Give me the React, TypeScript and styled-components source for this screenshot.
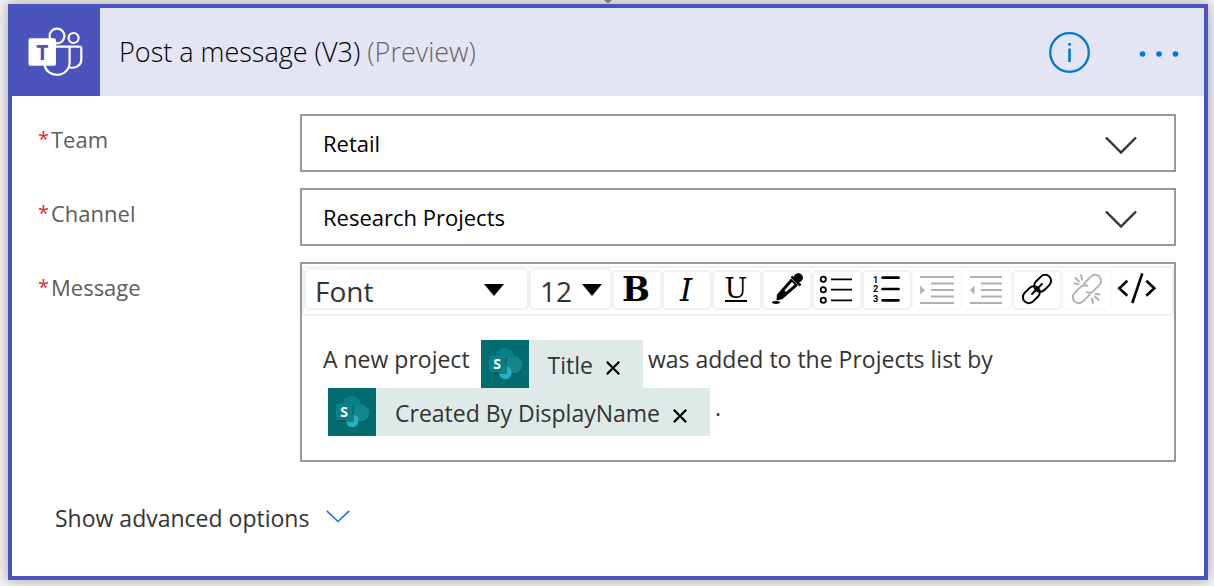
import React from "react";
import styled, { createGlobalStyle } from "styled-components";

const GlobalStyle = createGlobalStyle`
  *, *::before, *::after { box-sizing: border-box; }
  body {
    margin: 0;
    background: #f4f4f4;
    font-family: "Open Sans", "Noto Sans", sans-serif;
    font-size: 22px;
    color: #333;
  }
  button, select {
    font: inherit;
    color: inherit;
    margin: 0;
    padding: 0;
    border: 0;
    background: none;
  }
`;

const Page = styled.main`
  padding: 0 6px 6px 8px;
`;

const Connector = styled.svg`
  display: block;
  margin: 0 auto;
`;

const Card = styled.section`
  background: #fff;
  border: 4px solid #4b53bc;
  box-shadow: 0 0 14px rgba(0, 0, 0, 0.35);
`;

const Header = styled.header`
  display: flex;
  align-items: center;
  height: 88px;
  padding-right: 24px;
  background: #e4e5f4;
`;

const Logo = styled.div`
  width: 88px;
  height: 88px;
  margin-right: 19px;
  background: #4b53bc;
`;

const Title = styled.h1`
  flex: 1;
  margin: 0;
  font-size: 27px;
  line-height: 40px;
  font-weight: 300;
  color: #000;
`;

const Preview = styled.span`
  color: #666;
`;

const HeaderButton = styled.button`
  display: flex;
  color: #0078d9;
  & + & { margin-left: 48px; }
`;

const Body = styled.div`
  display: flex;
  flex-direction: column;
  gap: 16px;
  padding: 18px 28px 42px 26px;
`;

const Field = styled.div`
  display: grid;
  grid-template-columns: 262px minmax(0, 1fr);
  align-items: start;
`;

const Label = styled.label`
  display: flex;
  gap: 4px;
  padding-top: 9px;
  line-height: 32px;
  color: #5c5c5c;
`;

const Required = styled.span`
  width: 9px;
  font-size: 20px;
  color: #f0202c;
`;

const SelectBox = styled.div`
  display: grid;
  align-items: center;
  border: 2px solid #989898;
`;

const Select = styled.select`
  grid-area: 1 / 1;
  width: 100%;
  height: 54px;
  padding-left: 21px;
  appearance: none;
  color: #000;
`;

const SelectArrow = styled.svg`
  grid-area: 1 / 1;
  justify-self: end;
  margin-top: 4px;
  margin-right: 37px;
  pointer-events: none;
`;

const Editor = styled.div`
  min-height: 200px;
  border: 2px solid #989898;
`;

const Toolbar = styled.div`
  display: flex;
  flex-wrap: wrap;
  align-items: flex-end;
  margin-top: 2px;
  padding-bottom: 4px;
  border: 2px solid #f1f1f1;
  border-radius: 4px;
`;

const ToolPicker = styled.div<{ $width: number }>`
  display: grid;
  align-items: center;
  width: ${(p) => p.$width}px;
  height: 42px;
  border: 2px solid #f1f1f1;
  border-radius: 5px;
`;

const ToolSelect = styled.select`
  grid-area: 1 / 1;
  width: 100%;
  height: 38px;
  padding: 4px 0 0 9px;
  appearance: none;
  font-size: 28px;
  line-height: 34px;
`;

const ToolArrow = styled.svg<{ $end: number }>`
  grid-area: 1 / 1;
  justify-self: end;
  margin-top: 2px;
  margin-right: ${(p) => p.$end}px;
  pointer-events: none;
`;

const ToolButton = styled.button<{ $plain?: boolean }>`
  display: flex;
  align-items: center;
  justify-content: center;
  width: 50px;
  height: 40px;
  border: 2px solid ${(p) => (p.$plain ? "transparent" : "#f1f1f1")};
  border-radius: 5px;
  color: #000;
  &:disabled { opacity: 0.3; }
`;

const Glyph = styled.span<{ $kind: "bold" | "italic" | "underline" }>`
  margin-right: 2px;
  font-family: "DejaVu Serif", serif;
  font-size: ${(p) => (p.$kind === "bold" ? 33 : p.$kind === "italic" ? 31 : 27)}px;
  line-height: ${(p) => (p.$kind === "underline" ? 22 : 36)}px;
  font-weight: ${(p) => (p.$kind === "bold" ? 700 : 400)};
  font-style: ${(p) => (p.$kind === "italic" ? "italic" : "normal")};
  border-bottom: ${(p) => (p.$kind === "underline" ? "2px solid #000" : "0")};
`;

const Content = styled.div`
  padding: 24px 21px;
  font-size: 23px;
  line-height: 24px;
  outline: none;
`;

const Token = styled.span`
  display: inline-flex;
  align-items: center;
  height: 48px;
  margin: 0 5px;
  padding-right: 23px;
  vertical-align: -20px;
  background: #dee9e8;
`;

const TokenLabel = styled.span`
  padding: 2px 13px 0 19px;
`;

const TokenRemove = styled.button`
  display: flex;
  padding-top: 8px;
  color: #000;
`;

const Advanced = styled.button`
  display: flex;
  align-items: center;
  gap: 17px;
  align-self: flex-start;
  margin: 24px 0 0 17px;
  font-size: 23px;
  line-height: 32px;
`;

const TeamsIcon = () => (
  <svg width="88" height="88" viewBox="12 8 88 88" fill="none" stroke="#fff" strokeWidth="2.2" aria-hidden="true">
    <circle cx="57" cy="36" r="7.4" />
    <circle cx="73.6" cy="38" r="5" />
    <path d="M55 46.7h24.5q1.8 0 1.8 1.8v10.8c0 5.600-4.600 9.400-11.500 8.200" />
    <path d="M69.600 46.700v15.500c0 7.500-5.600 12.600-12.500 12.600c-6.500 0-11.600-4-12.500-9.800" />
    <rect x="28.500" y="38.300" width="27.500" height="27.500" rx="2" fill="#fff" stroke="none" />
    <text x="42.300" y="59.500" textAnchor="middle" fontFamily="Open Sans, sans-serif" fontWeight="700" fontSize="21" fill="#4b53bc" stroke="none">T</text>
  </svg>
);

const SharePointIcon = () => (
  <svg width="48" height="48" viewBox="0 0 48 48" aria-hidden="true">
    <rect width="48" height="48" fill="#036c70" />
    <circle cx="24" cy="18.500" r="10.500" fill="#025c60" opacity=".6" />
    <circle cx="23.600" cy="17.500" r="9.700" fill="#058084" />
    <circle cx="33.300" cy="26" r="9" fill="#025c60" opacity=".5" />
    <circle cx="33" cy="25" r="8.400" fill="#12868a" />
    <circle cx="24.300" cy="32.600" r="6.400" fill="#27b1bf" />
    <rect x="9" y="17" width="17" height="17" rx="1" fill="#024f52" opacity=".5" />
    <rect x="8" y="16" width="16.400" height="16" rx="1" fill="#088286" />
    <text x="16.200" y="29" textAnchor="middle" fontFamily="Open Sans, sans-serif" fontWeight="700" fontSize="14" fill="#fff">S</text>
  </svg>
);

const ToolIcon = ({ children }: { children: React.ReactNode }) => (
  <svg width="46" height="36" viewBox="0 0 46 36" fill="none" stroke="currentColor" strokeWidth="2" aria-hidden="true">
    {children}
  </svg>
);

const Chevron = () => (
  <SelectArrow width="32" height="18" viewBox="0 0 32 18" fill="none" stroke="#333" strokeWidth="2.4" aria-hidden="true">
    <path d="M1 1.500l15 15l15-15" />
  </SelectArrow>
);

const Triangle = ({ end }: { end: number }) => (
  <ToolArrow $end={end} width="20" height="12" viewBox="0 0 20 12" aria-hidden="true">
    <path d="M0 0h20l-10 12z" />
  </ToolArrow>
);

const Star = () => <Required aria-hidden="true">*</Required>;

function DynamicToken({ name }: { name: string }) {
  return (
    <Token contentEditable={false}>
      <SharePointIcon />
      <TokenLabel>{name}</TokenLabel>
      <TokenRemove type="button" aria-label={`Remove ${name}`}>
        <svg width="14" height="14" viewBox="0 0 14 14" stroke="currentColor" strokeWidth="2.2" aria-hidden="true">
          <path d="M.8.8l12.400 12.400M13.200.8l-12.400 12.400" />
        </svg>
      </TokenRemove>
    </Token>
  );
}

export default function App() {
  return (
    <>
      <GlobalStyle />
      <Page>
        <Connector width="10" height="4" viewBox="0 0 10 4" aria-hidden="true">
          <path d="M1 0h8l-4 3.500z" fill="#767676" />
        </Connector>
        <Card>
          <Header>
            <Logo><TeamsIcon /></Logo>
            <Title>Post a message (V3) <Preview>(Preview)</Preview></Title>
            <HeaderButton type="button" aria-label="Information">
              <svg width="42" height="42" viewBox="0 0 42 42" fill="none" stroke="currentColor" strokeWidth="2.300">
                <circle cx="21.500" cy="21.500" r="19.300" />
                <path d="M21.500 17.500v13.500M21.500 12v2.800" strokeWidth="2.600" />
              </svg>
            </HeaderButton>
            <HeaderButton type="button" aria-label="More options">
              <svg width="42" height="10" viewBox="0 0 42 10" fill="currentColor">
                <circle cx="4.500" cy="7" r="2.800" />
                <circle cx="21" cy="7" r="2.800" />
                <circle cx="37.500" cy="7" r="2.800" />
              </svg>
            </HeaderButton>
          </Header>
          <Body>
            <Field>
              <Label htmlFor="team"><Star />Team</Label>
              <SelectBox>
                <Select id="team"><option>Retail</option></Select>
                <Chevron />
              </SelectBox>
            </Field>
            <Field>
              <Label htmlFor="channel"><Star />Channel</Label>
              <SelectBox>
                <Select id="channel"><option>Research Projects</option></Select>
                <Chevron />
              </SelectBox>
            </Field>
            <Field>
              <Label as="div" id="message-label"><Star />Message</Label>
              <Editor>
                <Toolbar role="toolbar" aria-label="Formatting">
                  <ToolPicker $width={225}>
                    <ToolSelect aria-label="Font"><option>Font</option></ToolSelect>
                    <Triangle end={23} />
                  </ToolPicker>
                  <ToolPicker $width={83}>
                    <ToolSelect aria-label="Font size"><option>12</option></ToolSelect>
                    <Triangle end={8} />
                  </ToolPicker>
                  <ToolButton type="button" aria-label="Bold"><Glyph $kind="bold">B</Glyph></ToolButton>
                  <ToolButton type="button" aria-label="Italic"><Glyph $kind="italic">I</Glyph></ToolButton>
                  <ToolButton type="button" aria-label="Underline"><Glyph $kind="underline">U</Glyph></ToolButton>
                  <ToolButton type="button" aria-label="Text color">
                    <ToolIcon>
                      <ellipse cx="12" cy="30.500" rx="3.900" ry="1.400" fill="currentColor" stroke="none" />
                      <path d="M12.500 28.500l.5-6l14-16l7 7l-15.500 13.500z" fill="currentColor" stroke="none" />
                      <path d="M20.500 18.500l7.500-8.500l2.500 2.500l-8.500 7.500z" fill="#fff" stroke="none" />
                      <path d="M27.500 4.500l9 9" strokeWidth="2.500" />
                      <path d="M29 7l2-4.500q3.500-3 6.500 0t0 6.500l-4 2.500z" fill="currentColor" stroke="none" />
                    </ToolIcon>
                  </ToolButton>
                  <ToolButton type="button" aria-label="Bulleted list">
                    <ToolIcon>
                      <g strokeWidth="1.800">
                        <circle cx="9.300" cy="7.300" r="2.600" />
                        <circle cx="9.300" cy="17.700" r="2.600" />
                        <circle cx="9.300" cy="28.300" r="2.600" />
                        <path d="M17 7.300h21M17 17.700h21M17 28.300h21" />
                      </g>
                    </ToolIcon>
                  </ToolButton>
                  <ToolButton type="button" aria-label="Numbered list">
                    <ToolIcon>
                      <path d="M18.500 5.700h16M18.500 17h16M18.500 28.300h16" strokeWidth="2.700" strokeLinecap="round" />
                      <g fill="currentColor" stroke="none" fontFamily="Roboto, sans-serif" fontWeight="700" fontSize="9" textAnchor="middle">
                        <text x="11.500" y="10.500">1</text>
                        <text x="11.500" y="20.300">2</text>
                        <text x="11.500" y="30.100">3</text>
                      </g>
                    </ToolIcon>
                  </ToolButton>
                  <ToolButton type="button" aria-label="Indent" disabled>
                    <ToolIcon>
                      <path d="M6 5h34M17 11.500h23M17 18h23M17 24.500h23M6 31h34" />
                      <path d="M6.200 13.500l4.800 4.500l-4.800 4.500z" fill="currentColor" stroke="none" />
                    </ToolIcon>
                  </ToolButton>
                  <ToolButton type="button" aria-label="Outdent" disabled>
                    <ToolIcon>
                      <path d="M6 5h32M17 11.500h21M17 18h21M17 24.500h21M6 31h32" />
                      <path d="M10.500 13.500l-4.500 4.500l4.500 4.500z" fill="currentColor" stroke="none" />
                    </ToolIcon>
                  </ToolButton>
                  <ToolButton type="button" aria-label="Insert link">
                    <ToolIcon>
                      <g transform="translate(23 17) rotate(-45)" strokeLinecap="round">
                        <rect x="-1.500" y="-6" width="19" height="12" rx="6" />
                        <rect x="-17.500" y="-6" width="19" height="12" rx="6" />
                        <path d="M-7 0h14" />
                      </g>
                    </ToolIcon>
                  </ToolButton>
                  <ToolButton type="button" aria-label="Remove link" disabled>
                    <ToolIcon>
                      <g transform="translate(23 17) rotate(-45)" strokeLinecap="round">
                        <path d="M2-6h9.500a6 6 0 0 1 0 12h-8.500a6 6 0 0 1-5.500-4" />
                        <path d="M-2 6h-9.500a6 6 0 0 1 0-12h8.500a6 6 0 0 1 5.500 4" />
                      </g>
                      <path d="M11.500 6l3.500 3.500M17 3l1 4.500M10.500 11.500l4 .8M34.500 28l-3.500-3.500M29 31l-1-4.500M35.500 22.500l-4-.8" strokeLinecap="round" />
                    </ToolIcon>
                  </ToolButton>
                  <ToolButton type="button" aria-label="Code view" $plain>
                    <ToolIcon>
                      <path d="M13.300 8.700l-8 7.500l8 7.500M28.300 1.300l-10 29.700M32.300 8.700l8 7.500l-8 7.500" strokeWidth="2.600" />
                    </ToolIcon>
                  </ToolButton>
                </Toolbar>
                <Content role="textbox" aria-labelledby="message-label" contentEditable suppressContentEditableWarning>
                  {"A new project "}
                  <DynamicToken name="Title" />
                  {"was added to the Projects list by "}
                  <DynamicToken name="Created By DisplayName" />
                  {"."}
                </Content>
              </Editor>
            </Field>
            <Advanced type="button">
              Show advanced options
              <svg width="24" height="16" viewBox="0 0 24 16" fill="none" stroke="#1a6dff" strokeWidth="1.600" aria-hidden="true">
                <path d="M.8.8l11.200 10.700l11.200-10.700" />
              </svg>
            </Advanced>
          </Body>
        </Card>
      </Page>
    </>
  );
}
